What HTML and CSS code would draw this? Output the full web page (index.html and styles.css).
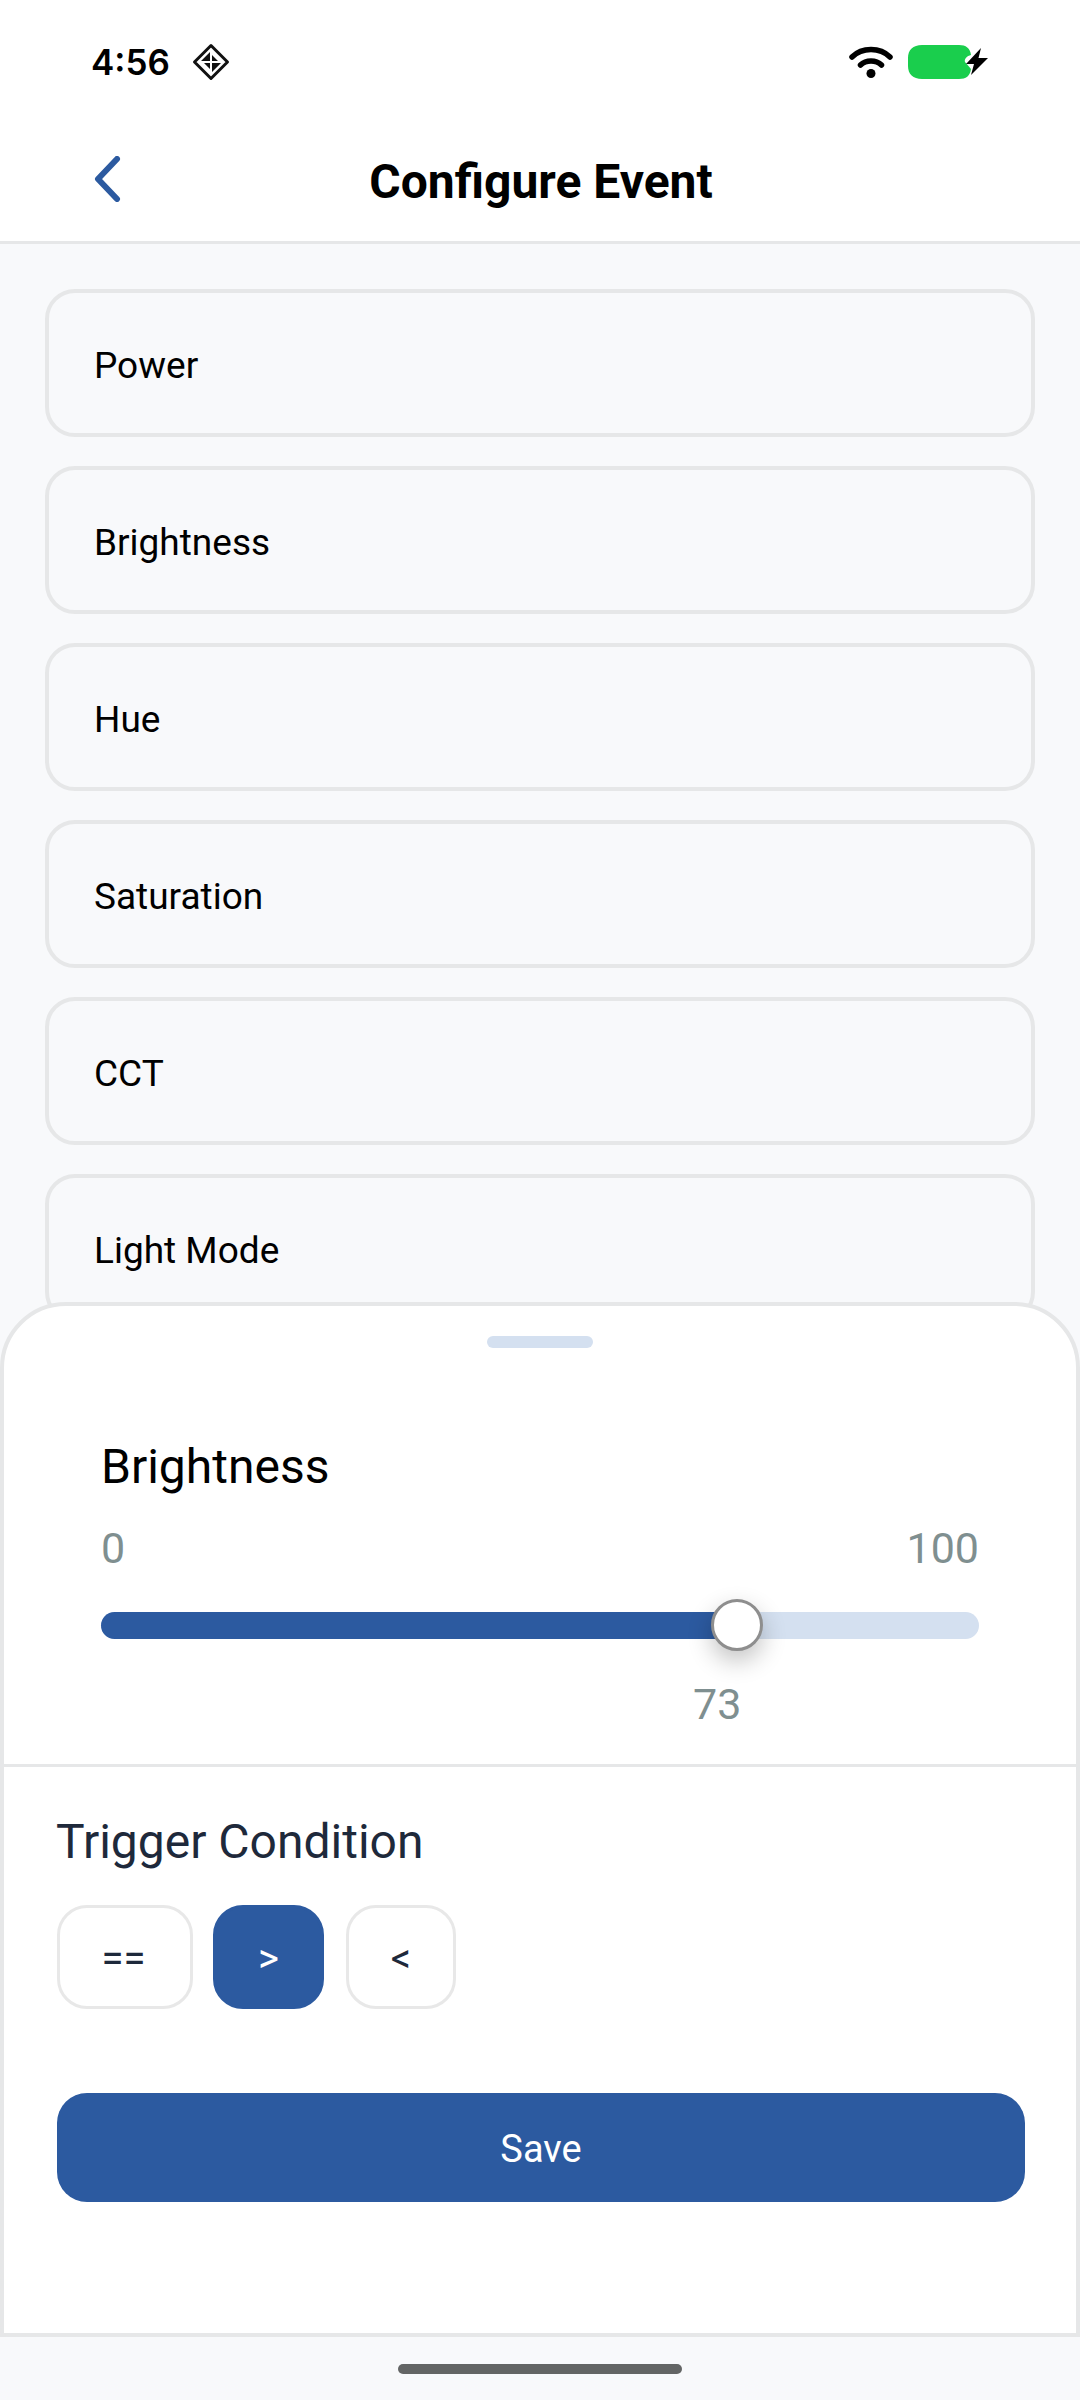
FILE: index.html
```html
<!DOCTYPE html>
<html lang="en">
<head>
    <meta charset="UTF-8">
    <meta name="viewport" content="width=device-width, initial-scale=1.0">
    <title>Configure Event</title>
    <link rel="stylesheet" href="styles.css">
</head>
<body>
    <div class="page">
        <div class="status-bar">
            <span class="time">4:56</span>
            <svg class="status-diamond" width="38" height="38" viewBox="0 0 38 38">
                <path d="M19 2.500 L35.500 19 L19 35.500 L2.500 19 Z" fill="none" stroke="#111" stroke-width="3" stroke-linejoin="round"/>
                <path d="M18 9 L18 18 L9 18 Z M20 12 L26 18 L20 18 Z M20 20 L29 20 L20 29 Z M18 20 L18 26 L12 20 Z" fill="#111"/>
            </svg>
            <div class="status-right">
                <svg width="44" height="34" viewBox="0 0 44 34">
                    <path d="M3 12 C13 2 31 2 41 12" fill="none" stroke="#000" stroke-width="5.500" stroke-linecap="round"/>
                    <path d="M11.500 20 C17 14.500 27 14.500 32.500 20" fill="none" stroke="#000" stroke-width="5.500" stroke-linecap="round"/>
                    <circle cx="22" cy="28.500" r="4.500" fill="#000"/>
                </svg>
                <svg class="battery" width="82" height="36" viewBox="0 0 82 36">
                    <path d="M15 1 H52 C59 1 63 4 64 11 C60 12 57 15 58 18 L64 25 C63 32 59 35 52 35 H15 C6 35 1 30 1 22 V14 C1 6 6 1 15 1 Z" fill="#1ace4d"/>
                    <path d="M74 4 L59 20 H67 L64 31 L81 14 H71.500 Z" fill="#000"/>
                </svg>
            </div>
        </div>

        <div class="header">
            <a href="#" class="back">
                <svg width="30" height="46" viewBox="0 0 30 46">
                    <path d="M25 3 L6 23 L25 43" fill="none" stroke="#2c5aa0" stroke-width="6" stroke-linecap="round" stroke-linejoin="round"/>
                </svg>
            </a>
            <h1>Configure Event</h1>
        </div>

        <div class="event-list">
            <div class="event-row">Power</div>
            <div class="event-row">Brightness</div>
            <div class="event-row">Hue</div>
            <div class="event-row">Saturation</div>
            <div class="event-row">CCT</div>
            <div class="event-row">Light Mode</div>
        </div>

        <div class="sheet">
            <div class="handle"></div>
            <div class="slider-block">
                <div class="slider-title">Brightness</div>
                <div class="slider-range">
                    <span>0</span>
                    <span>100</span>
                </div>
                <div class="track">
                    <div class="track-fill" style="width: 72.4%">
                        <div class="thumb"></div>
                    </div>
                </div>
                <div class="slider-value">73</div>
            </div>
            <div class="trigger-block">
                <div class="trigger-title">Trigger Condition</div>
                <div class="chips">
                    <button class="chip chip-eq">==</button>
                    <button class="chip chip-active">&gt;</button>
                    <button class="chip">&lt;</button>
                </div>
                <button class="save">Save</button>
            </div>
        </div>

        <div class="home-bar"></div>
    </div>
</body>
</html>
```

FILE: styles.css
```css
* {
    box-sizing: border-box;
}
html, body {
    margin: 0;
    padding: 0;
}
body {
    font-family: Roboto, "Noto Sans", sans-serif;
    background-color: #f8f9fb;
}
.page {
    position: relative;
    width: 1080px;
    height: 2400px;
    overflow: hidden;
    background-color: #f8f9fb;
}
.status-bar {
    display: flex;
    align-items: center;
    height: 124px;
    padding: 0 91px 0 91px;
    background: #fff;
}
.time {
    font-family: Inter, sans-serif;
    font-size: 35px;
    font-weight: 600;
    color: #000;
}
.status-diamond {
    margin-left: 22px;
}
.status-right {
    display: flex;
    align-items: center;
    gap: 14px;
    margin-left: auto;
}
.header {
    display: flex;
    align-items: center;
    justify-content: center;
    position: relative;
    height: 120px;
    background: #fff;
    border-bottom: 3px solid #e6e7e8;
    padding-bottom: 3px;
}
.back {
    position: absolute;
    left: 92px;
    top: 32px;
    line-height: 0;
}
.header h1 {
    margin: 0 0 0 2px;
    font-size: 48px;
    font-weight: 700;
    color: #000;
}
.event-list {
    display: flex;
    flex-direction: column;
    gap: 29px;
    padding: 45px 45px 0;
}
.event-row {
    display: flex;
    align-items: center;
    height: 148px;
    padding: 5px 0 0 45px;
    font-size: 37px;
    color: #000;
    background: #f8f9fb;
    border: 4px solid #e6e7e8;
    border-radius: 30px;
}
.sheet {
    position: absolute;
    left: 0;
    right: 0;
    top: 1302px;
    height: 1035px;
    background: #fff;
    border: 4px solid #e6e7e8;
    border-radius: 66px 66px 0 0;
}
.handle {
    width: 106px;
    height: 12px;
    margin: 30px auto 0;
    background: #d4e0f0;
    border-radius: 6px;
}
.slider-block {
    height: 419px;
    padding: 91px 97px 0;
    border-bottom: 3px solid #e6e7e8;
}
.slider-title {
    font-size: 48px;
    line-height: 56px;
    color: #000;
}
.slider-range {
    display: flex;
    justify-content: space-between;
    margin-top: 28px;
    font-size: 43px;
    line-height: 50px;
    color: #7f8f90;
}
.track {
    height: 27px;
    margin-top: 39px;
    background: #d4e0f0;
    border-radius: 14px;
}
.track-fill {
    position: relative;
    height: 100%;
    background: #2c5aa0;
    border-radius: 14px 0 0 14px;
}
.thumb {
    position: absolute;
    right: -26px;
    top: -13px;
    width: 52px;
    height: 52px;
    background: #fff;
    border: 3px solid #8e8e8e;
    border-radius: 50%;
    box-shadow: 0 10px 24px rgba(0, 0, 0, 0.24);
}
.slider-value {
    margin: 40px 0 0 592px;
    font-size: 43px;
    line-height: 50px;
    color: #7f8f90;
}
.trigger-block {
    padding: 47px 53px 0;
}
.trigger-title {
    margin-left: -1px;
    font-size: 48px;
    line-height: 56px;
    color: #1e293b;
}
.chips {
    display: flex;
    gap: 20px;
    margin-top: 35px;
}
.chip {
    width: 110px;
    height: 104px;
    padding: 3px 0 0;
    font-family: inherit;
    font-size: 40px;
    color: #1e293b;
    background: #fff;
    border: 3px solid #e8e8e8;
    border-radius: 30px;
}
.chip-eq {
    width: 136px;
    padding-right: 3px;
}
.chip-active {
    width: 111px;
    margin-right: 2px;
    color: #fff;
    background: #2c5aa0;
    border-color: #2c5aa0;
}
.save {
    display: block;
    width: 968px;
    height: 109px;
    margin-top: 84px;
    padding-top: 3px;
    font-family: inherit;
    font-size: 38px;
    color: #fff;
    background: #2c5aa0;
    border: none;
    border-radius: 30px;
}
.home-bar {
    position: absolute;
    left: 398px;
    top: 2364px;
    width: 284px;
    height: 10px;
    background: #636565;
    border-radius: 5px;
}
```
